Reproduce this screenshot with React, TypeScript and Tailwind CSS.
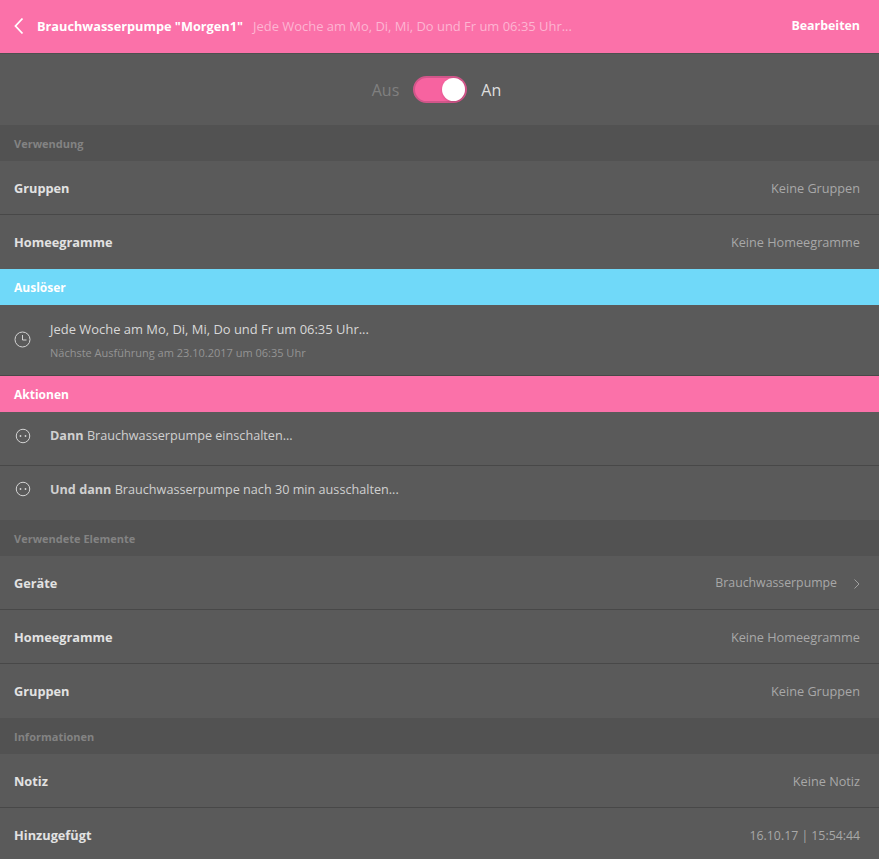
import React from 'react';

const font = { fontFamily: '"Open Sans", sans-serif' };

function SectionHead({ label, tone }: { label: string; tone: 'gray' | 'blue' | 'pink' }) {
	const cls =
		tone === 'gray'
			? 'bg-[#525252] text-[#838383] text-[11px]'
			: tone === 'blue'
				? 'bg-[#70d9f9] text-white text-[12px]'
				: 'bg-[#fb71a9] text-white text-[12px]';
	return (
		<div className={`h-9 flex items-center pt-0.5 px-3.5 font-bold ${cls}`}>{label}</div>
	);
}

function Row({
	label,
	value,
	chevron,
	last,
	small,
}: {
	label: string;
	value: string;
	chevron?: boolean;
	last?: boolean;
	small?: boolean;
}) {
	return (
		<div
			className={`flex items-center justify-between pt-0.5 pl-3.5 pr-[19px] text-[12.75px] ${
				last ? 'h-[54px]' : 'h-[54px] border-b border-[#484848]'
			}`}
		>
			<span className="font-bold text-[#e2e2e2]">{label}</span>
			<span className={`flex items-center text-[#a8a8a8] ${small ? 'text-[12.3px]' : 'text-[12.7px]'}`}>
				{value}
				{chevron && (
					<svg width="8" height="12" viewBox="0 0 8 12" className="ml-[16px] mr-[-1px]" fill="none">
						<path d="M1.5 1.5 6 6l-4.5 4.5" stroke="#a0a0a0" strokeWidth="1" />
					</svg>
				)}
			</span>
		</div>
	);
}

function FaceIcon() {
	return (
		<svg width="16" height="16" viewBox="0 0 16 16" fill="none" className="shrink-0">
			<circle cx="8" cy="8" r="6.75" stroke="#d4d4d4" strokeWidth="1" />
			<circle cx="5.5" cy="8" r="0.9" fill="#d4d4d4" />
			<circle cx="10.5" cy="8" r="0.9" fill="#d4d4d4" />
		</svg>
	);
}

function ActionRow({ bold, text, last }: { bold: string; text: string; last?: boolean }) {
	return (
		<div className={`flex h-[54px] pl-3.5 ${last ? '' : 'border-b border-[#484848]'}`}>
			<div className={`w-[36px] pl-px ${last ? 'pt-[15px]' : 'pt-[16px]'}`}>
				<FaceIcon />
			</div>
			<div className="pt-[13px] text-[12.65px] leading-[20px] text-[#d0d0d0]">
				<span className="font-bold">{bold}</span> {text}
			</div>
		</div>
	);
}

export default function App() {
	return (
		<div className="w-[879px] h-[859px] overflow-hidden bg-[#5a5a5a]" style={font}>
			<div className="h-[54px] bg-[#fb71a9] flex items-center pl-3.5 pr-[19px] border-b border-[#4f4f4f] text-[12.75px]">
				<svg width="10" height="18" viewBox="0 0 10 18" fill="none" className="mr-[13px] -mt-0.5">
					<path d="M8.5 1.5 1.5 9l7 7.5" stroke="white" strokeWidth="1.8" />
				</svg>
				<span className="font-bold text-white">Brauchwasserpumpe "Morgen1"</span>
				<span className="ml-[10px] text-[12.95px] text-[#fdb5d2]">
					Jede Woche am Mo, Di, Mi, Do und Fr um 06:35 Uhr...
				</span>
				<span className="ml-auto font-bold text-white text-[12.4px]">Bearbeiten</span>
			</div>

			<div className="h-[71px] flex items-center justify-center pr-[6px] text-[16px]">
				<span className="text-[#808080]">Aus</span>
				<div className="relative mx-[14px] w-[54px] h-[27px] rounded-full bg-[#f763a0] border-2 border-[#d1568a]">
					<div className="absolute right-0 top-0 w-[23px] h-[23px] rounded-full bg-white shadow" />
				</div>
				<span className="text-[#dedede]">An</span>
			</div>

			<SectionHead label="Verwendung" tone="gray" />
			<Row label="Gruppen" value="Keine Gruppen" />
			<Row label="Homeegramme" value="Keine Homeegramme" last />

			<SectionHead label="Auslöser" tone="blue" />
			<div className="flex h-[71px] pl-3.5 border-b border-[#484848]">
				<div className="w-[36px] pt-[26px]">
					<svg width="17" height="17" viewBox="0 0 17 17" fill="none">
						<circle cx="8.5" cy="8.5" r="7.5" stroke="#d4d4d4" strokeWidth="1" />
						<path d="M8.5 4v5h4" stroke="#d4d4d4" strokeWidth="1" />
					</svg>
				</div>
				<div className="pt-[14px]">
					<div className="text-[12.95px] leading-[20px] text-[#d8d8d8]">
						Jede Woche am Mo, Di, Mi, Do und Fr um 06:35 Uhr...
					</div>
					<div className="mt-[6px] text-[11px] leading-[16px] text-[#949494]">
						Nächste Ausführung am 23.10.2017 um 06:35 Uhr
					</div>
				</div>
			</div>

			<SectionHead label="Aktionen" tone="pink" />
			<ActionRow bold="Dann" text="Brauchwasserpumpe einschalten..." />
			<ActionRow bold="Und dann" text="Brauchwasserpumpe nach 30 min ausschalten..." last />

			<SectionHead label="Verwendete Elemente" tone="gray" />
			<Row label="Geräte" value="Brauchwasserpumpe" small chevron />
			<Row label="Homeegramme" value="Keine Homeegramme" />
			<Row label="Gruppen" value="Keine Gruppen" last />

			<SectionHead label="Informationen" tone="gray" />
			<Row label="Notiz" value="Keine Notiz" />
			<Row label="Hinzugefügt" value="16.10.17 | 15:54:44" small last />
		</div>
	);
}
